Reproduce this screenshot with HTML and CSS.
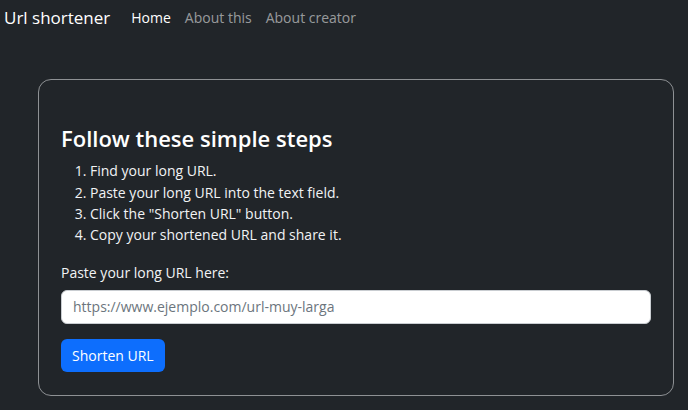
FILE: index.html
```html
<!DOCTYPE html>
<html lang="en">
<head>
<meta charset="utf-8">
<title>Url shortener</title>
<link rel="stylesheet" href="styles.css">
</head>
<body>
<nav class="navbar">
  <span class="brand">Url shortener</span>
  <ul class="nav">
    <li><a class="nav-link active" href="#">Home</a></li>
    <li><a class="nav-link" href="#">About this</a></li>
    <li><a class="nav-link" href="#">About creator</a></li>
  </ul>
</nav>
<main class="card">
  <h1 class="title">Follow these simple steps</h1>
  <ol class="steps">
    <li>Find your long URL.</li>
    <li>Paste your long URL into the text field.</li>
    <li>Click the "Shorten URL" button.</li>
    <li>Copy your shortened URL and share it.</li>
  </ol>
  <label class="label" for="url">Paste your long URL here:</label>
  <input class="input" id="url" type="text" placeholder="https://www.ejemplo.com/url-muy-larga">
  <button class="btn" type="button">Shorten URL</button>
</main>
</body>
</html>
```
FILE: styles.css
```css
* { box-sizing: border-box; }
html, body { margin: 0; padding: 0; }
body {
  background: #212529;
  color: #f1f3f5;
  font-family: "Open Sans", "Noto Sans", sans-serif;
  font-size: 14px;
  line-height: 1.5;
}
.navbar {
  display: flex;
  align-items: center;
  height: 35px;
  padding: 0 4px;
}
.brand {
  font-size: 17px;
  color: #fff;
  margin-right: 21px;
}
.nav {
  display: flex;
  list-style: none;
  margin: 0;
  padding: 0;
  gap: 14px;
}
.nav-link {
  color: rgba(255,255,255,0.55);
  text-decoration: none;
  font-size: 14px;
}
.nav-link.active { color: #fff; }
.card {
  margin: 44px 0 0 38px;
  width: 636px;
  height: 317px;
  border: 1px solid #8e9194;
  border-radius: 13px;
  padding: 45px 22px 0 22px;
  display: flex;
  flex-direction: column;
  align-items: flex-start;
}
.title {
  font-size: 22px;
  font-weight: 600;
  color: #fff;
  margin: 0 0 9px 0;
  line-height: 1.2;
}
.steps {
  margin: 0 0 16px 0;
  padding-left: 29px;
  line-height: 21.3px;
}
.label {
  margin-bottom: 7px;
}
.input {
  width: 100%;
  height: 34px;
  border: 1px solid #c9cdd1;
  border-radius: 6px;
  background: #fff;
  padding: 0 11px;
  font: inherit;
  color: #212529;
}
.input::placeholder { color: #6c757d; }
.btn {
  margin-top: 15px;
  height: 33px;
  padding: 0 11px;
  border: none;
  border-radius: 6px;
  background: #0d6efd;
  color: #fff;
  font: inherit;
}
```
